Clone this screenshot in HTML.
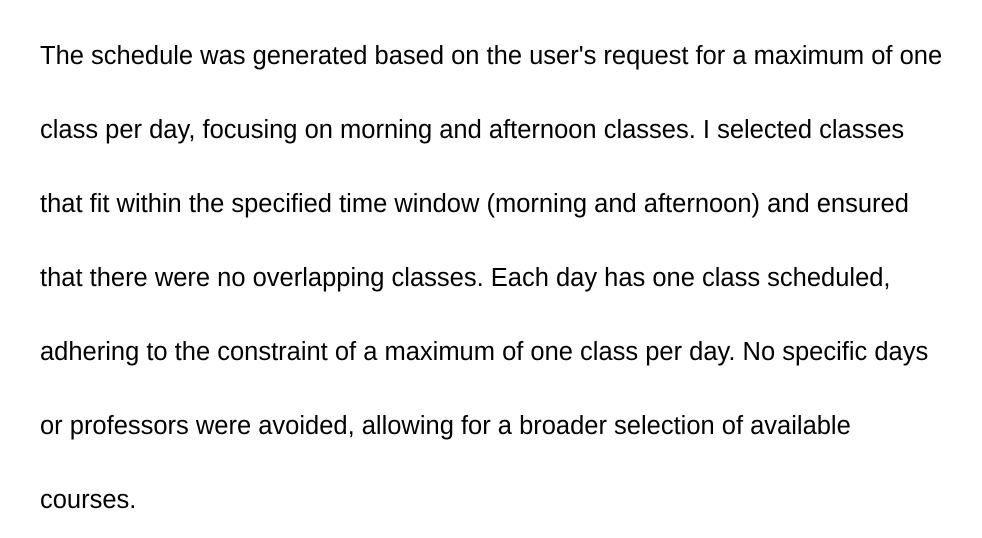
<!DOCTYPE html>
<html><head><meta charset="utf-8"><style>
html,body{margin:0;padding:0;background:#fff;width:982px;height:538px;overflow:hidden}
.w{position:absolute;left:40px;top:19px;font-family:"Liberation Sans",Arial,sans-serif;font-size:25.5px;line-height:74px;color:#000;white-space:nowrap}
</style></head><body><div class="w">
The schedule was generated based on the user's request for a maximum of one<br>
class per day, focusing on morning and afternoon classes. I selected classes<br>
that fit within the specified time window (morning and afternoon) and ensured<br>
that there were no overlapping classes. Each day has one class scheduled,<br>
adhering to the constraint of a maximum of one class per day. No specific days<br>
or professors were avoided, allowing for a broader selection of available<br>
courses.
</div></body></html>
